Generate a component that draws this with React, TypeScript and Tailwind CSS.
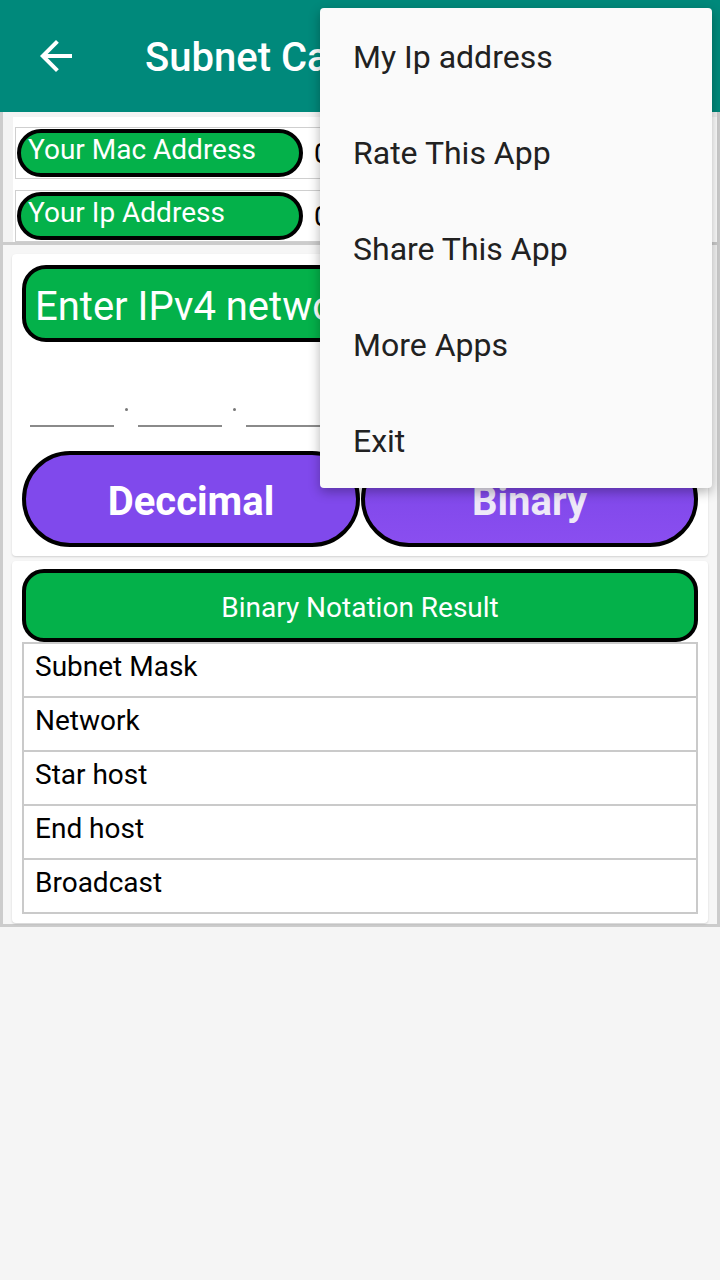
import React from 'react';

const menuItems = ['My Ip address', 'Rate This App', 'Share This App', 'More Apps', 'Exit'];
const resultRows = ['Subnet Mask', 'Network', 'Star host', 'End host', 'Broadcast'];

const BackArrow: React.FC = () => (
    <svg viewBox="0 0 24 24" className="h-[48px] w-[48px]" fill="#ffffff">
        <path d="M20 11H7.83l5.59-5.59L12 4l-8 8 8 8 1.41-1.41L7.83 13H20v-2z" />
    </svg>
);

const InfoRow: React.FC<{ label: string; value: string }> = ({ label, value }) => (
    <div className="flex h-[52px] items-center border border-[#cfcfcf] p-px">
        <div className="flex h-[48px] w-[286px] shrink-0 items-start rounded-full border-4 border-black bg-[#04b14a] pl-[7px]">
            <span className="text-[28px] leading-[33px] text-white">{label}</span>
        </div>
        <span className="ml-[11px] whitespace-nowrap text-[28px] leading-[33px] text-black">{value}</span>
    </div>
);

const OctetField: React.FC = () => <div className="h-[60px] w-[84px] border-b-2 border-[#8a8a8a]" />;

const Dot: React.FC<{ char?: string }> = ({ char }) => (
    <div className="flex h-[60px] w-[24px] items-end justify-center pb-[16px]">
        {char ? (
            <span className="text-[24px] leading-none text-[#777777]">{char}</span>
        ) : (
            <span className="h-[3px] w-[3px] rounded-full bg-[#777777]" />
        )}
    </div>
);

const App: React.FC = () => {
    return (
        <div className="relative min-h-[1280px] bg-[#f5f5f5] font-['Roboto','Noto_Sans',sans-serif]">
            <header className="flex h-[112px] items-center bg-[#00897b] pl-[32px] shadow-md">
                <BackArrow />
                <h1 className="ml-[65px] mt-[4px] whitespace-nowrap text-[40px] font-medium leading-none text-white">Subnet Calculator</h1>
            </header>

            <div className="border-x-[3px] border-b-[3px] border-[#cccccc]">
                {/* device info */}
                <div className="border-b-[3px] border-[#cccccc] bg-[#f3f3f3] pl-[10px] pt-[5px]">
                    <div className="flex flex-col gap-[11px] bg-white pl-[2px] pr-[10px] pt-[10px]">
                        <InfoRow label="Your Mac Address" value="02:00:00:00:00:00" />
                        <InfoRow label="Your Ip Address" value="0.0.0.0" />
                    </div>
                </div>

                <div className="flex flex-col gap-[5px] bg-[#f6f6f6] px-[9px] pb-px pt-[9px]">
                    {/* input card */}
                    <div className="rounded-[4px] bg-white px-[10px] pb-[9px] pt-[11px] shadow-[0_1px_2px_rgba(0,0,0,0.15)]">
                        <div className="h-[77px] rounded-[24px] border-4 border-black bg-[#04b14a] pl-[9px] pt-[14px]">
                            <span className="whitespace-nowrap text-[40px] leading-[47px] text-white">Enter IPv4 network address</span>
                        </div>
                        <div className="mb-[24px] flex h-[85px] items-end pl-[8px]">
                            <OctetField />
                            <Dot />
                            <OctetField />
                            <Dot />
                            <OctetField />
                            <Dot />
                            <OctetField />
                            <Dot char="/" />
                            <OctetField />
                        </div>
                        <div className="flex gap-px">
                            <button className="flex h-[96px] w-[338px] items-center justify-center rounded-full border-4 border-black bg-[#8049ec] pt-[6px] text-[40px] font-bold text-white">
                                Deccimal
                            </button>
                            <button className="flex h-[96px] w-[337px] items-center justify-center rounded-full border-4 border-black bg-gradient-to-b from-[#7a44e6] to-[#8a4ef0] pt-[6px] text-[40px] font-bold text-[#eee9f8]">
                                Binary
                            </button>
                        </div>
                    </div>

                    {/* result card */}
                    <div className="rounded-[4px] bg-white px-[10px] pb-[9px] pt-[8px] shadow-[0_1px_2px_rgba(0,0,0,0.15)]">
                        <div className="flex h-[73px] items-center justify-center rounded-[22px] border-4 border-black bg-[#04b14a] pt-[3px]">
                            <span className="text-[28px] leading-[33px] text-white">Binary Notation Result</span>
                        </div>
                        <div className="border-t-2 border-[#cacaca]">
                            {resultRows.map(row => (
                                <div key={row} className="h-[54px] border-x-2 border-b-2 border-[#cacaca] pl-[11px] pt-[6px]">
                                    <span className="text-[28px] leading-[33px] text-black">{row}</span>
                                </div>
                            ))}
                        </div>
                    </div>
                </div>
            </div>

            {/* overflow menu */}
            <div className="absolute left-[320px] top-[8px] w-[392px] rounded-[4px] bg-[#fafafa] shadow-[0_4px_12px_rgba(0,0,0,0.3)]">
                {menuItems.map(item => (
                    <div key={item} className="flex h-[96px] items-center pl-[33px] pt-[2px] text-[32px] text-[#212121]">
                        {item}
                    </div>
                ))}
            </div>
        </div>
    );
};

export default App;
